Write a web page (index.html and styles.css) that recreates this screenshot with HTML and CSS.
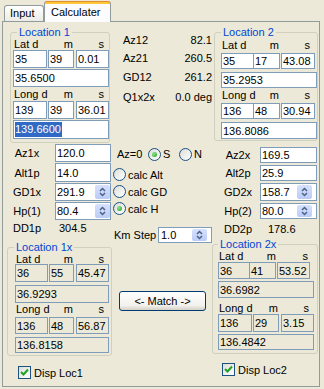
FILE: index.html
```html
<!DOCTYPE html>
<html lang="en">
<head>
  <meta charset="UTF-8">
  <meta name="viewport" content="width=device-width, initial-scale=1.0">
  <title>Calculater</title>
  <link rel="stylesheet" href="styles.css">
</head>
<body>

<div class="tabs">
  <div class="tab">Input</div>
  <div class="tab on">Calculater</div>
</div>

<div class="page">

  <!-- left column -->
  <div class="col c1">
    <fieldset class="grp g1">
      <legend>Location 1</legend>
      <div class="lbl r1"><span>Lat d</span><span>m</span><span>s</span></div>
      <div class="dms r2"><div class="tb">35</div><div class="tb">39</div><div class="tb">0.01</div></div>
      <div class="tb r3">35.6500</div>
      <div class="lbl r4"><span>Long d</span><span>m</span><span>s</span></div>
      <div class="dms r5"><div class="tb">139</div><div class="tb">39</div><div class="tb">36.01</div></div>
      <div class="tb r6"><span class="sel">139.6600</span></div>
    </fieldset>

    <div class="flds">
      <div class="fl">Az1x</div><div class="tb">120.0</div>
      <div class="fl">Alt1p</div><div class="tb">14.0</div>
      <div class="fl">GD1x</div><div class="tb sp">291.9<span class="spin"><svg width="15" height="14" viewBox="0 0 15 14"><path d="M5 6 L7.5 3.5 L10 6 M5 8 L7.5 10.5 L10 8" fill="none" stroke="#4D6185" stroke-width="1.5"/></svg></span></div>
      <div class="fl">Hp(1)</div><div class="tb sp">80.4<span class="spin"><svg width="15" height="14" viewBox="0 0 15 14"><path d="M5 6 L7.5 3.5 L10 6 M5 8 L7.5 10.5 L10 8" fill="none" stroke="#4D6185" stroke-width="1.5"/></svg></span></div>
      <div class="fl">DD1p</div><div class="val">304.5</div>
    </div>

    <fieldset class="grp g1x ro">
      <legend>Location 1x</legend>
      <div class="lbl r1"><span>Lat d</span><span>m</span><span>s</span></div>
      <div class="dms r2"><div class="tb">36</div><div class="tb">55</div><div class="tb">45.47</div></div>
      <div class="tb r3">36.9293</div>
      <div class="lbl r4"><span>Long d</span><span>m</span><span>s</span></div>
      <div class="dms r5"><div class="tb">136</div><div class="tb">48</div><div class="tb">56.87</div></div>
      <div class="tb r6">136.8158</div>
    </fieldset>

    <div class="chk"><span class="cb"><svg width="11" height="11" viewBox="0 0 11 11"><path d="M2 5 L4.5 7.5 L9 2.5" fill="none" stroke="#21A121" stroke-width="2"/></svg></span>Disp Loc1</div>
  </div>

  <!-- middle column -->
  <div class="col c2">
    <div class="info">
      <span>Az12</span><span>82.1</span>
      <span>Az21</span><span>260.5</span>
      <span>GD12</span><span>261.2</span>
      <span>Q1x2x</span><span>0.0 deg</span>
    </div>

    <div class="azrow">
      <span class="azl">Az=0</span>
      <div class="rad first"><i class="rb on"></i>S</div>
      <div class="rad"><i class="rb"></i>N</div>
    </div>

    <div class="calc">
      <div class="rad"><i class="rb"></i>calc Alt</div>
      <div class="rad"><i class="rb"></i>calc GD</div>
      <div class="rad"><i class="rb on"></i>calc H</div>
    </div>

    <div class="km">
      <span class="kml">Km Step</span>
      <div class="tb sp">1.0<span class="spin"><svg width="15" height="14" viewBox="0 0 15 14"><path d="M5 6 L7.5 3.5 L10 6 M5 8 L7.5 10.5 L10 8" fill="none" stroke="#4D6185" stroke-width="1.5"/></svg></span></div>
    </div>

    <button class="btn">&lt;- Match -&gt;</button>
  </div>

  <!-- right column -->
  <div class="col c3">
    <fieldset class="grp g2">
      <legend>Location 2</legend>
      <div class="lbl r1"><span>Lat d</span><span>m</span><span>s</span></div>
      <div class="dms r2"><div class="tb">35</div><div class="tb">17</div><div class="tb">43.08</div></div>
      <div class="tb r3">35.2953</div>
      <div class="lbl r4"><span>Long d</span><span>m</span><span>s</span></div>
      <div class="dms r5"><div class="tb">136</div><div class="tb">48</div><div class="tb">30.94</div></div>
      <div class="tb r6">136.8086</div>
    </fieldset>

    <div class="flds">
      <div class="fl">Az2x</div><div class="tb">169.5</div>
      <div class="fl">Alt2p</div><div class="tb">25.9</div>
      <div class="fl">GD2x</div><div class="tb sp">158.7<span class="spin"><svg width="15" height="14" viewBox="0 0 15 14"><path d="M5 6 L7.5 3.5 L10 6 M5 8 L7.5 10.5 L10 8" fill="none" stroke="#4D6185" stroke-width="1.5"/></svg></span></div>
      <div class="fl">Hp(2)</div><div class="tb sp">80.0<span class="spin"><svg width="15" height="14" viewBox="0 0 15 14"><path d="M5 6 L7.5 3.5 L10 6 M5 8 L7.5 10.5 L10 8" fill="none" stroke="#4D6185" stroke-width="1.5"/></svg></span></div>
      <div class="fl">DD2p</div><div class="val">178.6</div>
    </div>

    <fieldset class="grp g2x ro">
      <legend>Location 2x</legend>
      <div class="lbl r1 a"><span>Lat d</span><span>m</span><span>s</span></div>
      <div class="dms r2 a"><div class="tb">36</div><div class="tb">41</div><div class="tb">53.52</div></div>
      <div class="tb r3">36.6982</div>
      <div class="lbl r4 b"><span>Long d</span><span>m</span><span>s</span></div>
      <div class="dms r5 b"><div class="tb">136</div><div class="tb">29</div><div class="tb">3.15</div></div>
      <div class="tb r6">136.4842</div>
    </fieldset>

    <div class="chk"><span class="cb"><svg width="11" height="11" viewBox="0 0 11 11"><path d="M2 5 L4.5 7.5 L9 2.5" fill="none" stroke="#21A121" stroke-width="2"/></svg></span>Disp Loc2</div>
  </div>

</div>

</body>
</html>
```

FILE: styles.css
```css
* { box-sizing: border-box; }
body { margin: 0; background: #ECE9D8; color: #000; font: 11px "Liberation Sans", Arial, sans-serif; }

/* tabs */
.tabs { display: flex; align-items: flex-end; height: 21px; padding-left: 4px; }
.tab { height: 16px; width: 40px; padding-left: 5px; line-height: 15px; border: 1px solid #919B9C; border-bottom: 0; border-radius: 3px 3px 0 0; background: linear-gradient(#FFFFFF, #ECEBE6); }
.tab.on { position: relative; height: 21px; width: 67px; margin-bottom: -1px; padding: 3px 0 0 6px; line-height: 14px; border-top: 1px solid #E68B2C; background: linear-gradient(#FFC73C 0 2px, #FCFCFE 2px); }

/* page */
.page { margin-left: 2px; width: 318px; height: 366px; border: 1px solid #919B9C; display: grid; grid-template-columns: 109px 100px 107px; align-items: start; }
.col { display: flex; flex-direction: column; align-items: flex-start; }

/* text boxes */
.tb { display: flex; align-items: center; justify-content: space-between; padding: 0 0 0 1px; border: 1px solid #7F9DB9; background: #fff; white-space: nowrap; overflow: hidden; }
.ro .tb { background: transparent; }
.sel { background: #316AC5; color: #fff; line-height: 15px; padding-right: 1px; }
.spin { display: flex; align-items: center; justify-content: center; width: 15px; height: calc(100% - 2px); border-radius: 2px; background: linear-gradient(#D6E1FD, #BACCF7); }
.c3 .spin, .km .spin { margin-right: 4px; }

/* group boxes */
.grp { margin: 0; padding: 0; min-width: 0; border: 1px solid #D0D0BF; border-radius: 3px; }
.grp legend { padding: 0 2px; line-height: 14px; color: #0046D5; }
.dms, .lbl { display: grid; }
.lbl span { white-space: nowrap; }
.lbl span:first-child { padding-left: 1px; }
.lbl span:nth-child(2) { text-align: right; padding-right: 1px; }
.lbl span:nth-child(3) { text-align: right; padding-right: 5px; }

.g1 { margin: 3px 0 0 7px; width: 100px; padding: 0 0 3px 2px; }
.g1 legend { margin-left: 4px; }
.g1 .dms, .g1 .lbl { grid-template-columns: 34px 27px 35px; }
.g1 .dms .tb:nth-child(2) { margin-left: 1px; }
.g1 .dms .tb:nth-child(3) { margin-left: 2px; }
.g1 .r1 { height: 11px; line-height: 11px; }
.g1 .r2 { height: 18px; }
.g1 .r3 { height: 18px; margin-top: 1px; }
.g1 .r4 { height: 11px; line-height: 11px; margin-top: 2px; }
.g1 .r5 { height: 18px; margin-top: 1px; }
.g1 .r6 { height: 19px; margin-top: 1px; }

.g2 { margin: 3px 0 0 2px; width: 104px; padding: 0 0 1px 6px; }
.g2 legend { margin-left: 0; }
.g2 .dms, .g2 .lbl { grid-template-columns: 33px 26px 35px; }
.g2 .dms .tb:nth-child(2) { margin-left: -1px; }
.g2 .dms .tb:nth-child(3) { margin-left: 1px; }
.g2 .r1 { height: 11px; line-height: 11px; margin-top: 1px; }
.g2 .r2 { height: 16px; margin-top: 2px; }
.g2 .r3 { height: 16px; margin-top: 3px; }
.g2 .r4 { height: 11px; line-height: 11px; margin-top: 2px; }
.g2 .r5 { height: 16px; margin-top: 2px; }
.g2 .r6 { height: 17px; margin-top: 3px; }

.g1x { margin: 5px 0 0 4px; width: 105px; padding: 0 2px 2px 7px; }
.g1x legend { margin-left: -1px; }
.g1x .dms, .g1x .lbl { grid-template-columns: 33px 26px 35px; }
.g1x .dms .tb:nth-child(2) { margin-left: 1px; }
.g1x .dms .tb:nth-child(3) { margin-left: 2px; }
.g1x .r1 { height: 10px; line-height: 10px; }
.g1x .r2 { height: 18px; }
.g1x .r3 { height: 18px; margin-top: 3px; }
.g1x .r4 { height: 11px; line-height: 11px; margin-top: 1px; }
.g1x .r5 { height: 17px; margin-top: 2px; }
.g1x .r6 { height: 16px; margin-top: 3px; }

.g2x { margin: 1px 0 0 0; width: 106px; padding: 0 3px 3px 5px; }
.g2x legend { margin-left: 0; }
.g2x .a { grid-template-columns: 32px 26px 34px; }
.g2x .b { grid-template-columns: 34px 27px 35px; }
.g2x .dms.a .tb:nth-child(2) { margin-left: -1px; }
.g2x .dms.a .tb:nth-child(3) { margin-left: 1px; }
.g2x .dms.b .tb:nth-child(2) { margin-left: 1px; }
.g2x .dms.b .tb:nth-child(3) { margin-left: 2px; }
.g2x .lbl.a span:nth-child(2) { padding-right: 0; }
.g2x .lbl.a span:nth-child(3) { padding-right: 2px; }
.g2x .r1 { height: 10px; line-height: 10px; }
.g2x .r2 { height: 17px; margin-top: 1px; }
.g2x .r3 { height: 17px; margin-top: 2px; }
.g2x .r4 { height: 10px; line-height: 10px; margin-top: 5px; }
.g2x .r5 { height: 18px; margin-top: 1px; }
.g2x .r6 { height: 16px; margin-top: 2px; }

/* value fields */
.flds { display: grid; }
.fl { display: flex; align-items: center; justify-content: center; }
.val { display: flex; align-items: center; }
.c1 .flds { margin-top: 1px; grid-template-columns: 48px 56px; column-gap: 4px; grid-template-rows: 18px 19px 18px 18px 14px; row-gap: 1px; }
.c1 .val { padding-left: 4px; }
.c3 .flds { margin-top: 6px; padding-left: 4px; grid-template-columns: 44px 57px; grid-template-rows: 16px 16px 18px 16px 15px; row-gap: 2px; }
.c3 .val { padding-left: 8px; }

/* middle */
.info { display: grid; grid-template-columns: 1fr auto; grid-template-rows: 18px 17px 21px 20px; align-items: center; width: 100px; margin-top: 9px; padding-left: 11px; }
.info span:nth-child(even) { text-align: right; }
.azrow { display: flex; align-items: center; height: 14px; margin: 40px 0 0 5px; }
.azl { width: 31px; }
.rad { display: flex; align-items: center; gap: 2px; height: 13px; }
.rad.first { width: 31px; }
.rb { width: 13px; height: 13px; border: 1px solid #1C5180; border-radius: 50%; background: linear-gradient(135deg, #DCDCD7, #FFFFFF); display: flex; align-items: center; justify-content: center; }
.rb.on::after { content: ""; width: 5px; height: 5px; border-radius: 50%; background: radial-gradient(circle at 35% 35%, #8BE68B, #21A121); }
.calc { display: grid; grid-template-rows: 13px 13px 13px; row-gap: 4px; margin: 7px 0 0 1px; }
.km { display: flex; align-items: center; height: 16px; margin: 12px 0 0 2px; }
.kml { width: 44px; }
.km .tb { width: 54px; height: 16px; padding-left: 2px; }
.btn { margin: 48px 0 0 7px; width: 87px; height: 20px; padding: 0; font: inherit; color: #000; border: 1px solid #003C74; border-radius: 3px; background: linear-gradient(#FFFFFF, #F2F1EC 75%, #D6D0C5); }

/* checkboxes */
.chk { display: flex; align-items: center; gap: 3px; height: 13px; }
.c1 .chk { margin: 10px 0 0 15px; }
.c3 .chk { margin: 9px 0 0 10px; }
.cb { width: 13px; height: 13px; border: 1px solid #1C5180; background: linear-gradient(135deg, #DCDCD7, #FFFFFF); display: flex; align-items: center; justify-content: center; }
```
